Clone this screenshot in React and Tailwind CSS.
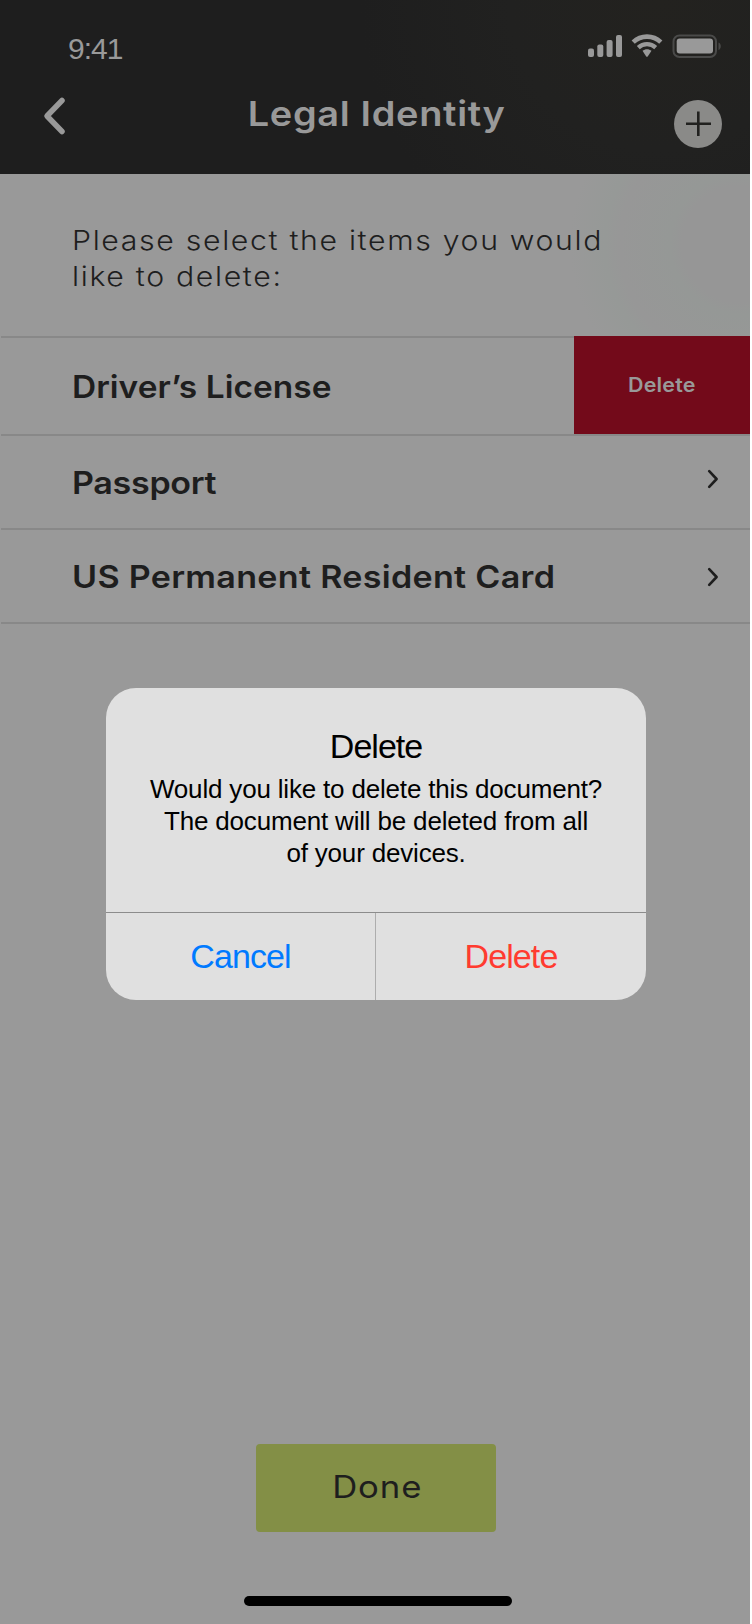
import React from "react";

function StatusIcons() {
  return (
    <svg width="136" height="26" viewBox="0 0 136 26" fill="none">
      <g fill="#999999">
        <rect x="2" y="15.5" width="6" height="8.5" rx="2" />
        <rect x="11.3" y="11.5" width="6" height="12.5" rx="2" />
        <rect x="20.6" y="7" width="6" height="17" rx="2" />
        <rect x="30" y="2" width="6" height="22" rx="2" />
        <path d="M56.800 17.100c2.600-2.100 6.400-2.100 9 0l-3.800 5.700c-.4.500-1.100.500-1.500 0z" transform="translate(-0.3 0.6)" />
      </g>
      <g stroke="#999999" strokeWidth="4.600" fill="none">
        <path d="M47.200 9.200c7.700-7.400 19.900-7.400 27.600 0" />
        <path d="M52.300 14.600c4.900-4.600 12.500-4.600 17.400 0" strokeWidth="4.200" />
      </g>
      <rect x="87.500" y="2.500" width="42.500" height="21.500" rx="6" stroke="#4a4a49" strokeWidth="2" />
      <rect x="90.700" y="5.500" width="36.300" height="15" rx="3" fill="#999999" />
      <path d="M132.500 9.500c3 1.200 3 6.300 0 7.500z" fill="#4a4a49" />
    </svg>
  );
}

function Header() {
  return (
    <header className="h-[174px] overflow-hidden bg-[#1e1e1e] bg-[radial-gradient(circle_at_660px_0px,#23221f_0,#212120_150px,#1e1e1e_300px)] font-['Inter',sans-serif] text-[#999999]">
      <div className="flex h-[82px] items-start justify-between pt-[33px] pr-[28px] pl-[68px]">
        <span className="font-['Liberation_Sans',sans-serif] text-[30px] leading-[32px] tracking-[-1px]">9:41</span>
        <StatusIcons />
      </div>
      <div className="grid grid-cols-[120px_1fr_120px]">
        <button className="flex pt-[14px] pl-[42px]" aria-label="Back">
          <svg width="26" height="40" viewBox="0 0 26 40" fill="none">
            <path d="M20 4.500 L5 20 L20 35.500" stroke="#999999" strokeWidth="5.500" strokeLinecap="round" strokeLinejoin="round" />
          </svg>
        </button>
        <h1 className="scale-x-110 pt-[10px] pl-[3px] text-center text-[34.500px] leading-[44px] font-semibold tracking-[0.600px]">Legal Identity</h1>
        <button className="flex pt-[18px] pl-[44px]" aria-label="Add">
          <svg width="48" height="48" viewBox="0 0 48 48">
            <circle cx="24" cy="24" r="24" fill="#8a8a88" />
            <path d="M24.300 11.500v24.500M12 23.800h25" stroke="#21211f" strokeWidth="2.600" fill="none" />
          </svg>
        </button>
      </div>
    </header>
  );
}

function Chevron() {
  return (
    <svg width="14" height="22" viewBox="0 0 14 22" fill="none">
      <path d="M3.200 3.200 L10.600 11 L3.200 18.800" stroke="#1e1e1e" strokeWidth="2.600" strokeLinecap="round" strokeLinejoin="round" />
    </svg>
  );
}

export default function App() {
  return (
    <div className="h-[1624px] w-[752px] bg-white">
      <div className="relative flex h-full w-[750px] flex-col bg-[#999999] font-['Inter',sans-serif] text-[#1e1e1e]">
        <Header />
        <main className="flex flex-1 flex-col bg-[radial-gradient(circle_at_740px_70px,#969696_0,#969696_58px,#959896_70px,#979797_120px,#969997_135px,#999999_170px)]">
          <p className="ml-[72px] h-[162px] w-[560px] origin-left scale-x-110 pt-[48px] text-[27.500px] leading-[36px] font-light tracking-[1.500px]">
            Please select the items you would
            <br />
            like to delete:
          </p>
          <ul className="ml-px border-b-2 border-[#888888]">
            <li className="flex h-[98px] justify-between">
              <div className="flex flex-1 items-center border-t-2 border-[#888888] pt-[3px] pl-[71px] text-[31px] font-semibold">
                <span className="origin-left scale-x-108 tracking-[0.020px]">Driver’s License</span>
              </div>
              <button className="w-[176px] bg-[#730a1a] pt-[2px] text-[19.500px] font-semibold text-[#999999]">
                <span className="inline-block scale-x-110 tracking-[0.200px]">Delete</span>
              </button>
            </li>
            <li className="flex h-[94px] items-center justify-between border-t-2 border-[#888888] pr-[30px] pl-[71px]">
              <span className="origin-left scale-x-110 pt-[3px] text-[31px] font-semibold tracking-[-0.300px]">Passport</span>
              <div className="pb-[6px]"><Chevron /></div>
            </li>
            <li className="flex h-[94px] items-center justify-between border-t-2 border-[#888888] pr-[30px] pl-[71px]">
              <span className="origin-left scale-x-110 pt-[3px] text-[31px] font-semibold tracking-[0.260px]">US Permanent Resident Card</span>
              <div className="pt-[2px]"><Chevron /></div>
            </li>
          </ul>
          <div className="mt-auto flex flex-col items-center pb-[18px]">
            <button className="ml-[2px] h-[88px] w-[240px] rounded-[4px] bg-[#838f46] pb-[1px] pl-[3px] text-[31px] font-normal">
              <span className="inline-block scale-x-112 tracking-[0.800px]">Done</span>
            </button>
            <div className="mt-[64px] ml-[6px] h-[10px] w-[268px] rounded-full bg-black" />
          </div>
        </main>

        <div
          role="dialog"
          className="absolute top-[688px] left-[106px] flex h-[312px] w-[540px] flex-col overflow-hidden rounded-[30px] bg-[#e0e0e0] text-center font-['Liberation_Sans',sans-serif] text-black"
        >
          <div className="h-[225px] border-b border-[#8c8c8c] pt-[38px]">
            <h2 className="text-[34px] leading-[40px] tracking-[-1px]">Delete</h2>
            <p className="pt-[7px] text-[26px] leading-[32px] tracking-[-0.180px]">
              Would you like to delete this document?
              <br />
              The document will be deleted from all
              <br />
              of your devices.
            </p>
          </div>
          <div className="grid flex-1 grid-cols-[270px_270px] text-[34px] tracking-[-0.900px]">
            <button className="border-r border-[#adadad] text-[#007aff]">Cancel</button>
            <button className="text-[#ff3b30]">Delete</button>
          </div>
        </div>
      </div>
    </div>
  );
}
